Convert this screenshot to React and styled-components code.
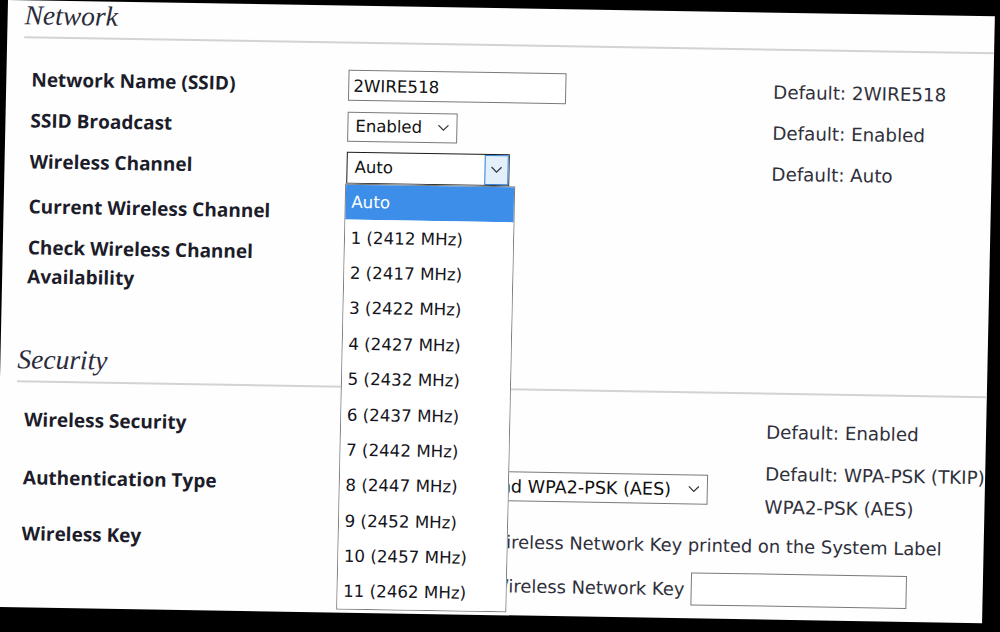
import React from "react"
import styled, { createGlobalStyle } from "styled-components"

const GlobalStyle = createGlobalStyle`
  html, body {
    margin: 0;
    padding: 0;
    background: #000;
    overflow: hidden;
  }
  body {
    width: 1000px;
    height: 632px;
  }
`

// the shot is slightly tilted, so the whole sheet is tilted the same way
const Sheet = styled.div`
  box-sizing: border-box;
  margin-left: 8px;
  width: 987px;
  height: 607px;
  padding-left: 17px;
  background: #fdfefd;
  transform-origin: 0 0;
  transform: rotate(0.95deg) skewX(-0.26deg);
  font-family: "DejaVu Sans", Verdana, sans-serif;
  color: #2d2d38;
`

const Heading = styled.h2`
  margin: ${({ $top }) => $top}px 0 0 0;
  padding-bottom: 6px;
  border-bottom: 2px solid #d3d3d3;
  font: italic 400 27.5px/30px "Liberation Serif", serif;
  color: #2b2b3c;
`

const Rows = styled.div`
  padding-left: 8px;
`

const Row = styled.div`
  display: grid;
  grid-template-columns: 317px 425px 1fr;
  align-items: center;
  height: ${({ $h }) => $h}px;
  margin-top: ${({ $mt }) => $mt || 0}px;
`

const Label = styled.div`
  align-self: ${({ $top }) => ($top ? "start" : "center")};
  padding-top: ${({ $pt }) => $pt || 0}px;
  font: 700 19px/29px "Open Sans", sans-serif;
  color: #1c1c2a;
`

const Cell = styled.div`
  align-self: ${({ $top }) => ($top ? "start" : "center")};
  display: flex;
  flex-direction: column;
  align-items: flex-start;
  font-size: 18px;
`

const Default = styled.div`
  font-size: 18.3px;
  line-height: 33px;
  color: #30303c;
`

const TextBox = styled.div`
  box-sizing: border-box;
  display: flex;
  align-items: center;
  width: ${({ $w }) => $w}px;
  height: ${({ $h }) => $h || 31}px;
  margin-left: ${({ $ml }) => $ml || 0}px;
  padding: 0 4px;
  border: 1px solid #7a7a7a;
  background: #fff;
  font-size: 16.7px;
  color: #111;
`

const SelectWrap = styled.div`
  position: relative;
  z-index: ${({ $open }) => ($open ? 10 : 1)};
`

const SelectBox = styled.div`
  box-sizing: border-box;
  display: flex;
  align-items: center;
  justify-content: space-between;
  width: ${({ $w }) => ($w ? `${$w}px` : "auto")};
  height: ${({ $h }) => $h || 30}px;
  padding-left: 7px;
  border: 1px solid ${({ $focus }) => ($focus ? "#1b1b1b" : "#7a7a7a")};
  background: #fff;
  font-size: ${({ $fs }) => $fs || 16.5}px;
  color: #111;
  white-space: nowrap;
`

const Arrow = styled.span`
  display: flex;
  align-items: center;
  box-sizing: border-box;
  width: ${({ $focus }) => ($focus ? 24 : 26)}px;
  height: 100%;
  margin-left: ${({ $gap }) => $gap || 0}px;
  padding-right: ${({ $focus }) => ($focus ? 0 : 7)}px;
  justify-content: ${({ $focus }) => ($focus ? "center" : "flex-end")};
  border: ${({ $focus }) => ($focus ? "1px solid #2f7fd8" : "none")};
  background: ${({ $focus }) => ($focus ? "#e3effb" : "transparent")};
`

const List = styled.ul`
  position: absolute;
  top: 100%;
  left: -1.5px;
  box-sizing: border-box;
  width: 170.5px;
  margin: 0;
  padding: 0;
  list-style: none;
  border: 1px solid #7d7d7d;
  background: #fff;
`

const Option = styled.li`
  display: flex;
  align-items: center;
  height: 35.4px;
  padding-left: 6px;
  font-size: 16.7px;
  background: ${({ $selected }) => ($selected ? "#3c8ee9" : "#fff")};
  color: ${({ $selected }) => ($selected ? "#fff" : "#141420")};
`

const Button = styled.div`
  padding: 4px 12px;
  border: 1px solid #7a7a7a;
  background: #e6e6e6;
  font-size: 16px;
`

const RadioLine = styled.div`
  display: flex;
  align-items: center;
  height: ${({ $h }) => $h}px;
  white-space: nowrap;
  font-size: 17.9px;
  color: #30303c;
`

const Radio = styled.span`
  box-sizing: border-box;
  width: 13px;
  height: 13px;
  margin: 0 9px 0 18px;
  border-radius: 50%;
  border: 1px solid #333;
  background: ${({ $on }) => ($on ? "radial-gradient(#333 35%, #fff 40%)" : "#fff")};
`

const Chevron = () => (
  <svg width="12" height="7" viewBox="0 0 12 7">
    <polyline points="1,1 6,6 11,1" fill="none" stroke="#333" strokeWidth="1.2" />
  </svg>
)

const Select = ({ value, w, h, fs, focus, gap }) => (
  <SelectBox $w={w} $h={h} $fs={fs} $focus={focus}>
    <span>{value}</span>
    <Arrow $focus={focus} $gap={gap}>
      <Chevron />
    </Arrow>
  </SelectBox>
)

const channels = [
  "Auto",
  "1 (2412 MHz)",
  "2 (2417 MHz)",
  "3 (2422 MHz)",
  "4 (2427 MHz)",
  "5 (2432 MHz)",
  "6 (2437 MHz)",
  "7 (2442 MHz)",
  "8 (2447 MHz)",
  "9 (2452 MHz)",
  "10 (2457 MHz)",
  "11 (2462 MHz)",
]

const App = () => (
  <>
    <GlobalStyle />
    <Sheet>
      <Heading $top={0}>Network</Heading>
      <Rows>
        <Row $h={41} $mt={21}>
          <Label>Network Name (SSID)</Label>
          <Cell>
            <TextBox $w={218}>2WIRE518</TextBox>
          </Cell>
          <Default>Default: 2WIRE518</Default>
        </Row>
        <Row $h={41}>
          <Label>SSID Broadcast</Label>
          <Cell>
            <Select value="Enabled" w={110} />
          </Cell>
          <Default>Default: Enabled</Default>
        </Row>
        <Row $h={41}>
          <Label>Wireless Channel</Label>
          <Cell>
            <SelectWrap $open>
              <Select value="Auto" w={163} h={32} focus />
              <List>
                {channels.map((c, i) => (
                  <Option key={c} $selected={i === 0}>
                    {c}
                  </Option>
                ))}
              </List>
            </SelectWrap>
          </Cell>
          <Default>Default: Auto</Default>
        </Row>
        <Row $h={49}>
          <Label>Current Wireless Channel</Label>
          <Cell>1</Cell>
          <div />
        </Row>
        <Row $h={64}>
          <Label $top $pt={2}>
            Check Wireless Channel
            <br />
            Availability
          </Label>
          <Cell $top>
            <Button>Check</Button>
          </Cell>
          <div />
        </Row>
      </Rows>

      <Heading $top={49}>Security</Heading>
      <Rows>
        <Row $h={41} $mt={17}>
          <Label>Wireless Security</Label>
          <Cell>
            <Select value="Enabled" w={110} />
          </Cell>
          <Default>Default: Enabled</Default>
        </Row>
        <Row $h={66} $mt={4.5}>
          <Label>Authentication Type</Label>
          <Cell>
            <SelectWrap>
              <Select value="WPA-PSK (TKIP) and WPA2-PSK (AES)" h={30} fs={17.6} gap={10} />
            </SelectWrap>
          </Cell>
          <Default>
            Default: WPA-PSK (TKIP)
            <br />
            WPA2-PSK (AES)
          </Default>
        </Row>
        <Row $h={88} $mt={2.5}>
          <Label $top $pt={6}>Wireless Key</Label>
          <Cell $top>
            <RadioLine $h={41}>
              <Radio $on />
              Use Default Wireless Network Key printed on the System Label
            </RadioLine>
            <RadioLine $h={47}>
              <Radio />
              Use Custom Wireless Network Key
              <TextBox $w={216} $h={33} $ml={6} />
            </RadioLine>
          </Cell>
          <div />
        </Row>
      </Rows>
    </Sheet>
  </>
)

export default App
